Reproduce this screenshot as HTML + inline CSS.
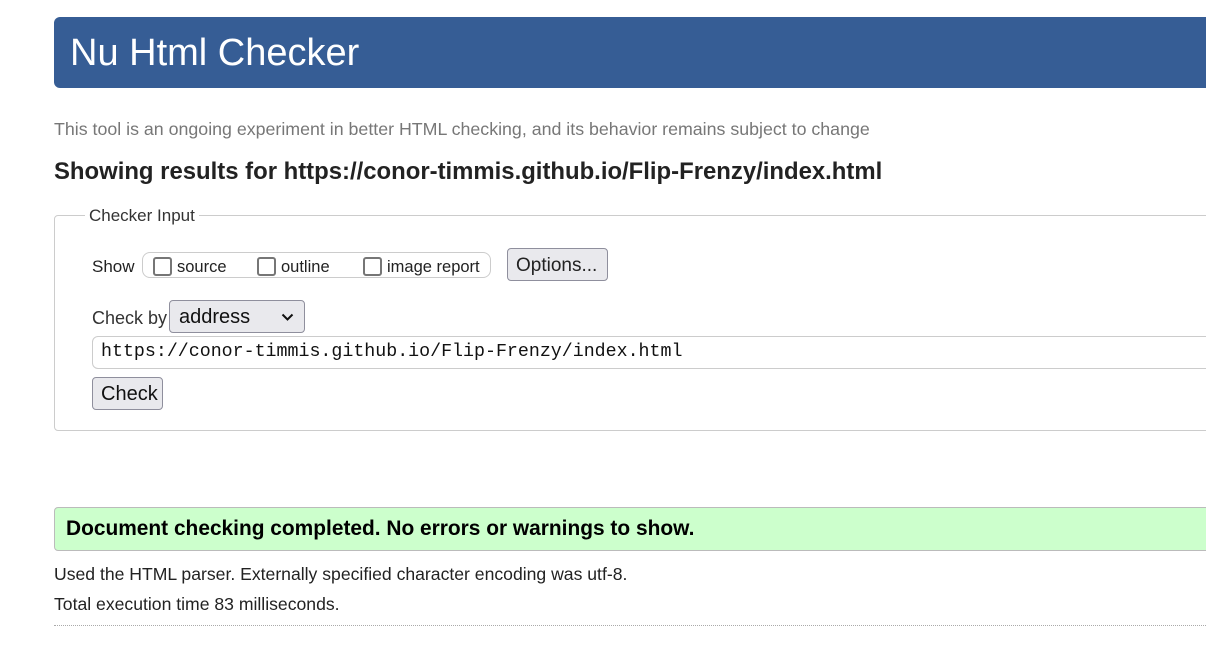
<!DOCTYPE html>
<html><head><style>
body{margin:0;width:1206px;height:652px;overflow:hidden;background:#fff;font-family:"Liberation Sans",sans-serif;color:#222;position:relative}
.a{position:absolute;white-space:nowrap}
.hdr{left:54px;top:17px;width:1170px;height:71px;background:#365d95;border-radius:6px}
.hdr span{position:absolute;left:16px;top:15px;color:#fff;font-size:38px}
.cb{display:inline-block;width:19px;height:19px;border:2px solid #767676;border-radius:3px;box-sizing:border-box;vertical-align:-4px;margin-right:5px}
.btn{background:#e9e9ed;border:1px solid #8f8f9d;border-radius:4px;box-sizing:border-box}
</style></head><body>
<div class="a hdr"><span>Nu Html Checker</span></div>
<div class="a" style="left:54px;top:119px;font-size:17.8px;color:#777">This tool is an ongoing experiment in better HTML checking, and its behavior remains subject to change</div>
<div class="a" style="left:54px;top:158px;font-size:23.9px;font-weight:bold;color:#222">Showing results for https://conor-timmis.github.io/Flip-Frenzy/index.html</div>
<div class="a" style="left:54px;top:215px;width:1170px;height:216px;border:1px solid #ccc;border-radius:4px;box-sizing:border-box"></div>
<div class="a" style="left:85px;top:206px;background:#fff;padding:0 4px;font-size:17px;color:#333">Checker Input</div>
<div class="a" style="left:92px;top:257px;font-size:17px">Show</div>
<div class="a" style="left:142px;top:252px;width:349px;height:26px;border:1px solid #ccc;border-radius:8px;box-sizing:border-box"></div>
<div class="a" style="left:153px;top:257px;font-size:16.5px"><span class="cb"></span>source</div>
<div class="a" style="left:257px;top:257px;font-size:16.5px"><span class="cb"></span>outline</div>
<div class="a" style="left:363px;top:257px;font-size:16.5px"><span class="cb"></span>image report</div>
<div class="a btn" style="left:507px;top:248px;width:101px;height:33px;font-size:19px;padding:6px 0 0 8px">Options...</div>
<div class="a" style="left:92px;top:308px;font-size:18px;color:#333">Check by</div>
<div class="a btn" style="left:169px;top:300px;width:136px;height:33px;font-size:20px;padding:5px 0 0 9px;color:#111">address<svg style="position:absolute;right:10px;top:12px" width="13" height="9" viewBox="0 0 13 9"><path d="M1.5 1.5L6.5 6.5L11.5 1.5" stroke="#111" stroke-width="2" fill="none"/></svg></div>
<div class="a" style="left:92px;top:336px;width:1130px;height:33px;border:1px solid #ccc;border-radius:6px;box-sizing:border-box"></div>
<div class="a" style="left:101px;top:342px;font-family:'Liberation Mono',monospace;font-size:18.3px;color:#111">https://conor-timmis.github.io/Flip-Frenzy/index.html</div>
<div class="a btn" style="left:92px;top:377px;width:71px;height:33px;font-size:20px;padding:5px 0 0 8px;color:#111">Check</div>
<div class="a" style="left:54px;top:507px;width:1170px;height:44px;background:#ccffcc;border:1px solid #bbb;border-radius:4px;box-sizing:border-box"></div>
<div class="a" style="left:66px;top:517px;font-size:20.9px;font-weight:bold;color:#000">Document checking completed. No errors or warnings to show.</div>
<div class="a" style="left:54px;top:564px;font-size:17.6px">Used the HTML parser. Externally specified character encoding was utf-8.</div>
<div class="a" style="left:54px;top:594px;font-size:17.6px">Total execution time 83 milliseconds.</div>
<div class="a" style="left:54px;top:625px;width:1170px;border-top:1px dotted #aaa"></div>
</body></html>
